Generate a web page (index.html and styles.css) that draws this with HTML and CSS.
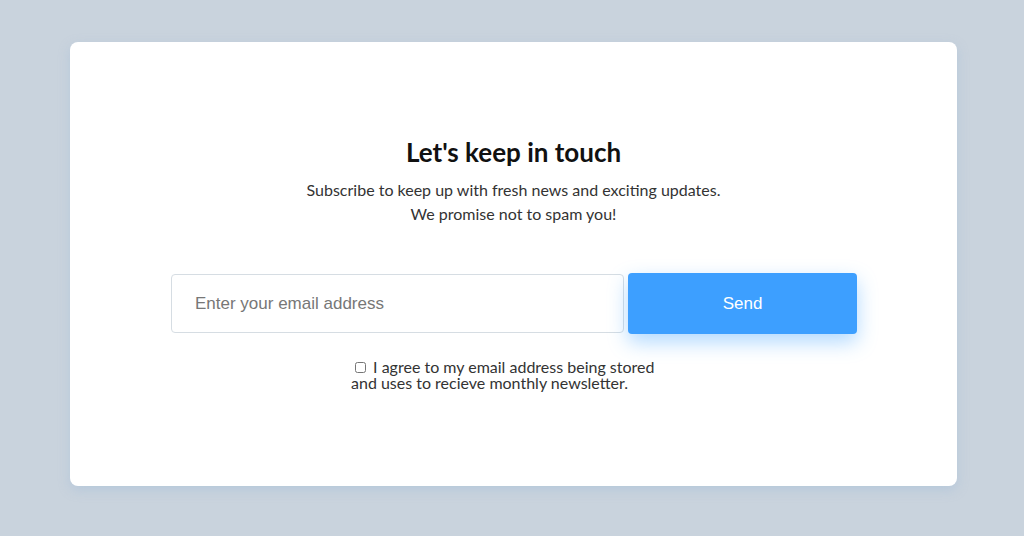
FILE: index.html
```html
<!DOCTYPE html>
<html lang="en">
<head>
    <meta charset="UTF-8">
    <meta name="viewport" content="width=device-width, initial-scale=1.0">
    <title>Newsletter</title>
    <link rel="stylesheet" href="styles.css">
</head>
<body>
    <div class="card">
        <h1>Let's keep in touch</h1>
        <p class="intro">
            Subscribe to keep up with fresh news and exciting updates.<br>
            We promise not to spam you!
        </p>

        <form class="subscribe">
            <input type="email" class="email" placeholder="Enter your email address">
            <button type="button" class="send">Send</button>
        </form>

        <label class="agree">
            <input type="checkbox"> I agree to my email address being stored and uses to recieve monthly newsletter.
        </label>
    </div>
</body>
</html>
```

FILE: styles.css
```css
* {
    margin: 0;
    padding: 0;
    box-sizing: border-box;
}

body {
    font-family: Lato, "Noto Sans", sans-serif;
    background: #c9d3dd;
    padding: 42px 67px 50px 70px;
    height: 536px;
}

.card {
    height: 444px;
    background: #fff;
    border-radius: 8px;
    box-shadow: 0 4px 12px rgba(150, 180, 215, 0.35);
    display: flex;
    flex-direction: column;
    align-items: center;
    justify-content: center;
}

h1 {
    font-size: 26px;
    font-weight: 700;
    color: #111;
    line-height: 30px;
    margin-bottom: 11px;
}

.intro {
    font-size: 16px;
    line-height: 24px;
    color: #333;
    text-align: center;
    margin-bottom: 47px;
}

.subscribe {
    display: flex;
    gap: 4px;
    align-items: center;
    margin-left: 1px;
}

.email {
    width: 453px;
    height: 59px;
    border: 1px solid #d6dde3;
    border-radius: 4px;
    padding: 0 23px;
    font-family: "Liberation Sans", Arial, sans-serif;
    font-size: 17px;
    color: #333;
}

.email::placeholder {
    color: #777;
}

.send {
    width: 229px;
    height: 61px;
    border: none;
    border-radius: 4px;
    background: #3d9fff;
    color: #fff;
    font-family: "Liberation Sans", Arial, sans-serif;
    font-size: 17px;
    box-shadow: 0 8px 20px rgba(61, 159, 255, 0.4);
}

.agree {
    display: block;
    width: 312px;
    margin: 25px 0 0 -13px;
    font-size: 16px;
    line-height: 16px;
    color: #333;
}

.agree input {
    margin: 3px 3px 0 4px;
    width: 11px;
    height: 11px;
}
```
